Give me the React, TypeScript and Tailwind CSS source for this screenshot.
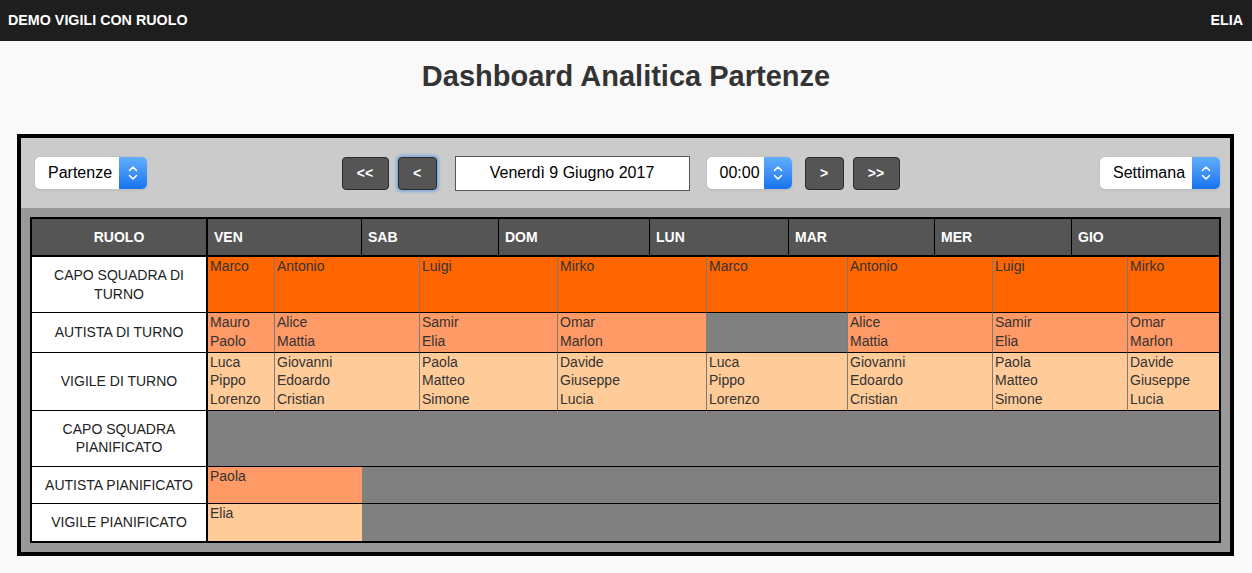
import React from "react";

const font = { fontFamily: '"Liberation Sans", Arial, Helvetica, sans-serif' };

type Seg = { span: number; names?: string[]; color?: string };

const cols =
  "grid-cols-[176px_66px_88px_57px_80px_58px_93px_56px_83px_58px_88px_57px_80px_55px_1fr]";

const days = ["VEN", "SAB", "DOM", "LUN", "MAR", "MER", "GIO"];

const spanClass: Record<number, string> = {
  1: "col-span-1",
  2: "col-span-2",
  12: "col-span-12",
  14: "col-span-14",
};

const capo = "bg-[#ff6600]";
const autista = "bg-[#ff9966]";
const vigile = "bg-[#ffcc99]";

const rows: { label: string; segs: Seg[] }[] = [
  {
    label: "CAPO SQUADRA DI TURNO",
    segs: [
      { span: 1, names: ["Marco"], color: capo },
      { span: 2, names: ["Antonio"], color: capo },
      { span: 2, names: ["Luigi"], color: capo },
      { span: 2, names: ["Mirko"], color: capo },
      { span: 2, names: ["Marco"], color: capo },
      { span: 2, names: ["Antonio"], color: capo },
      { span: 2, names: ["Luigi"], color: capo },
      { span: 1, names: ["Mirko"], color: capo },
    ],
  },
  {
    label: "AUTISTA DI TURNO",
    segs: [
      { span: 1, names: ["Mauro", "Paolo"], color: autista },
      { span: 2, names: ["Alice", "Mattia"], color: autista },
      { span: 2, names: ["Samir", "Elia"], color: autista },
      { span: 2, names: ["Omar", "Marlon"], color: autista },
      { span: 2 },
      { span: 2, names: ["Alice", "Mattia"], color: autista },
      { span: 2, names: ["Samir", "Elia"], color: autista },
      { span: 1, names: ["Omar", "Marlon"], color: autista },
    ],
  },
  {
    label: "VIGILE DI TURNO",
    segs: [
      { span: 1, names: ["Luca", "Pippo", "Lorenzo"], color: vigile },
      { span: 2, names: ["Giovanni", "Edoardo", "Cristian"], color: vigile },
      { span: 2, names: ["Paola", "Matteo", "Simone"], color: vigile },
      { span: 2, names: ["Davide", "Giuseppe", "Lucia"], color: vigile },
      { span: 2, names: ["Luca", "Pippo", "Lorenzo"], color: vigile },
      { span: 2, names: ["Giovanni", "Edoardo", "Cristian"], color: vigile },
      { span: 2, names: ["Paola", "Matteo", "Simone"], color: vigile },
      { span: 1, names: ["Davide", "Giuseppe", "Lucia"], color: vigile },
    ],
  },
  { label: "CAPO SQUADRA PIANIFICATO", segs: [{ span: 14 }] },
  {
    label: "AUTISTA PIANIFICATO",
    segs: [{ span: 2, names: ["Paola"], color: autista }, { span: 12 }],
  },
  {
    label: "VIGILE PIANIFICATO",
    segs: [{ span: 2, names: ["Elia"], color: vigile }, { span: 12 }],
  },
];

function Stepper() {
  return (
    <div className="flex w-[28px] items-center justify-center self-stretch rounded-r-[5px] bg-gradient-to-b from-[#62aefc] to-[#1473ee]">
      <svg width="10" height="18" viewBox="0 0 10 18" fill="none" stroke="white" strokeWidth="1.6" strokeLinecap="round" strokeLinejoin="round">
        <path d="M1.5 6.5 L5 3 L8.5 6.5" />
        <path d="M1.5 11.5 L5 15 L8.5 11.5" />
      </svg>
    </div>
  );
}

function MacSelect({ value, w, pl }: { value: string; w: string; pl: string }) {
  return (
    <div className={`flex h-[32px] ${w} items-center rounded-[5px] bg-white shadow-[0_0_0_1px_#c4c4c4,0_1px_2px_rgba(0,0,0,0.2)]`}>
      <span className={`flex-1 ${pl} text-[16px] text-black`}>{value}</span>
      <Stepper />
    </div>
  );
}

function NavButton({ label, w, focus }: { label: string; w: string; focus?: boolean }) {
  return (
    <button
      className={`flex h-[33px] ${w} items-center justify-center rounded-[4px] border border-[#2a2a2a] bg-[#555555] text-[14px] font-bold text-white ${
        focus ? "shadow-[0_0_3px_2px_rgba(80,150,230,0.6)]" : ""
      }`}
    >
      {label}
    </button>
  );
}

export default function App() {
  return (
    <div className="min-h-[573px] bg-[#f9f9f9]" style={font}>
      <div className="flex h-[41px] items-center justify-between bg-[#1e1e1e] pl-[8px] pr-[9px] text-[14.3px] font-bold text-white">
        <span>DEMO VIGILI CON RUOLO</span>
        <span>ELIA</span>
      </div>

      <h1 className="pt-[18px] pb-[41px] text-center text-[29px] leading-[34px] font-bold text-[#333333]">
        Dashboard Analitica Partenze
      </h1>

      <div className="ml-[17px] mr-[18px] border-4 border-black">
        <div className="flex h-[70px] items-center justify-between bg-[#cbcbcb] pl-[14px] pr-[10px]">
          <MacSelect value="Partenze" w="w-[112px]" pl="pl-[13px]" />

          <div className="mr-[6px] flex items-center">
            <NavButton label="<<" w="w-[47px]" />
            <div className="ml-[9px]">
              <NavButton label="<" w="w-[39px]" focus />
            </div>
            <div className="ml-[18px] flex h-[35px] w-[235px] items-center justify-center border border-[#555555] bg-white text-[16px] text-black">
              Venerdì 9 Giugno 2017
            </div>
            <div className="ml-[17px]">
              <MacSelect value="00:00" w="w-[85px]" pl="pl-[13px]" />
            </div>
            <div className="ml-[13px]">
              <NavButton label=">" w="w-[39px]" />
            </div>
            <div className="ml-[9px]">
              <NavButton label=">>" w="w-[47px]" />
            </div>
          </div>

          <MacSelect value="Settimana" w="w-[120px]" pl="pl-[13px]" />
        </div>

        <div className="bg-[#999999] px-[9px] pt-[9px] pb-[9px]">
          <div className={`grid ${cols} border-2 border-black`}>
            <div className="flex h-[38px] items-center justify-center border-r-2 border-b-2 border-black bg-[#555555] text-[14px] font-bold text-white">
              RUOLO
            </div>
            {days.map((d, i) => (
              <div
                key={d}
                className={`col-span-2 flex h-[38px] items-center border-b-2 border-black bg-[#555555] pl-[6px] text-[14px] font-bold text-white ${
                  i < days.length - 1 ? "border-r" : ""
                }`}
              >
                {d}
              </div>
            ))}

            {rows.map((row, ri) => {
              const last = ri === rows.length - 1;
              return (
                <React.Fragment key={row.label}>
                  <div
                    className={`flex items-center justify-center border-r-2 border-black bg-white px-[8px] py-[9px] text-center text-[14px] leading-[18.5px] text-[#222222] ${
                      last ? "" : "border-b"
                    }`}
                  >
                    {row.label}
                  </div>
                  {row.segs.map((s, si) => (
                    <div
                      key={si}
                      className={`${spanClass[s.span]} ${s.color ?? "bg-[#808080]"} ${
                        last ? "" : "border-b border-b-black"
                      } ${s.color && si > 0 ? "border-l border-l-[#7a7a7a]" : ""} pt-0 pb-[1.5px] pl-[2px] text-[14px] leading-[18.5px] text-[#333333]`}
                    >
                      {s.names?.map((n) => (
                        <div key={n}>{n}</div>
                      ))}
                    </div>
                  ))}
                </React.Fragment>
              );
            })}
          </div>
        </div>
      </div>
    </div>
  );
}
